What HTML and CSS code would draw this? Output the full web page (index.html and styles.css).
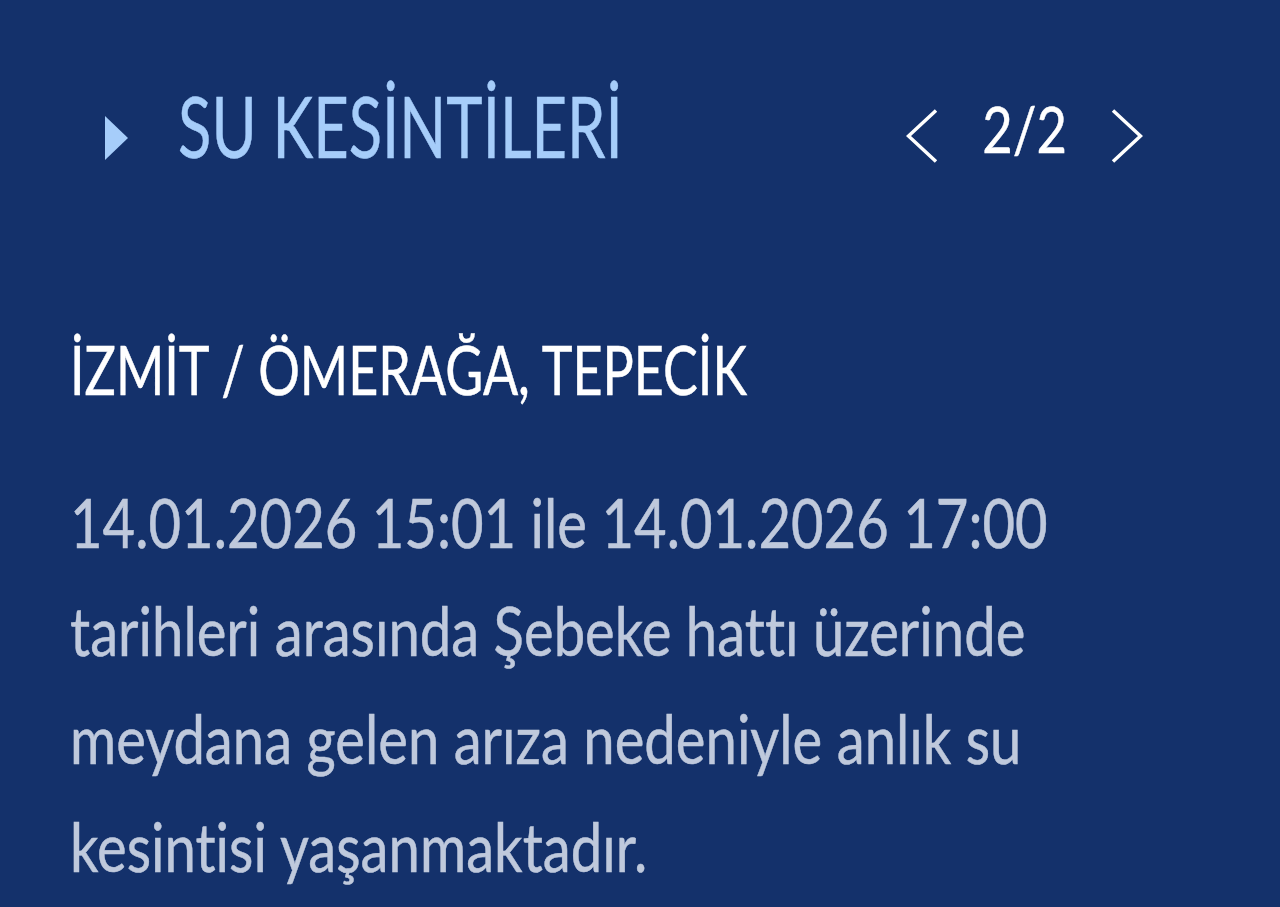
FILE: index.html
```html
<!DOCTYPE html>
<html lang="tr">
<head>
    <meta charset="UTF-8">
    <title>Su Kesintileri</title>
    <link rel="stylesheet" href="styles.css">
</head>
<body>
    <div class="outage-box">
        <div class="outage-header">
            <div class="outage-title">
                <span class="title-arrow"></span>
                <h2 class="narrow title-text">SU KESİNTİLERİ</h2>
            </div>
            <div class="pager">
                <button class="pager-btn" aria-label="Önceki">
                    <svg viewBox="0 0 32 54" width="32" height="54"><polyline points="30,1.5 2.5,27 30,52.5" /></svg>
                </button>
                <span class="narrow pager-count">2/2</span>
                <button class="pager-btn" aria-label="Sonraki">
                    <svg viewBox="0 0 32 54" width="32" height="54"><polyline points="2,1.5 29.5,27 2,52.5" /></svg>
                </button>
            </div>
        </div>

        <div class="outage-item">
            <h3 class="narrow outage-place">İZMİT / ÖMERAĞA, TEPECİK</h3>
            <p class="narrow outage-text">14.01.2026 15:01 ile 14.01.2026 17:00<br>tarihleri arasında Şebeke hattı üzerinde<br>meydana gelen arıza nedeniyle anlık su<br>kesintisi yaşanmaktadır.</p>
        </div>
    </div>
</body>
</html>
```

FILE: styles.css
```css
/* Genel */
body {
    margin: 0;
    background-color: #14316b;
    font-family: Lato, "Noto Sans", sans-serif;
    font-variant-ligatures: none;
    height: 907px;
    overflow: hidden;
}

/* dar yazı: Lato'yu yatayda sıkıştır */
.narrow {
    transform-origin: left center;
    white-space: nowrap;
    -webkit-text-stroke: 0.5px currentColor;
}

.outage-box {
    padding: 70px 137px 0 70px;
}

/* Başlık satırı */
.outage-header {
    display: flex;
    align-items: center;
    justify-content: space-between;
    height: 110px;
}

.outage-title {
    display: flex;
    align-items: center;
    padding-left: 35px;
}

.title-arrow {
    width: 0;
    height: 0;
    border-top: 22px solid transparent;
    border-bottom: 22px solid transparent;
    border-left: 23px solid #a6cdfa;
    margin-right: 50px;
    margin-top: 25px;
}

.title-text {
    margin: 0;
    font-size: 85px;
    font-weight: normal;
    line-height: 110px;
    color: #a6cdfa;
    transform: scaleX(0.724);
}

.pager {
    display: flex;
    align-items: center;
    gap: 35px;
}

.pager-btn {
    background: none;
    border: none;
    padding: 0;
    cursor: pointer;
    display: flex;
    margin-top: 22px;
}

.pager-btn svg {
    fill: none;
    stroke: #fff;
    stroke-width: 3.5;
}

.pager-count {
    color: #fff;
    font-size: 64px;
    margin-top: 6px;
    transform: scaleX(0.82);
    transform-origin: center;
}

/* Kesinti içeriği */
.outage-item {
    margin-top: 144px;
}

.outage-place {
    margin: 0;
    font-size: 67px;
    font-weight: normal;
    line-height: 90px;
    color: #fff;
    transform: scaleX(0.777);
}

.outage-text {
    margin: 54px 0 0;
    font-size: 67px;
    line-height: 108px;
    color: #bfc9dc;
    transform: scaleX(0.839);
}
```
